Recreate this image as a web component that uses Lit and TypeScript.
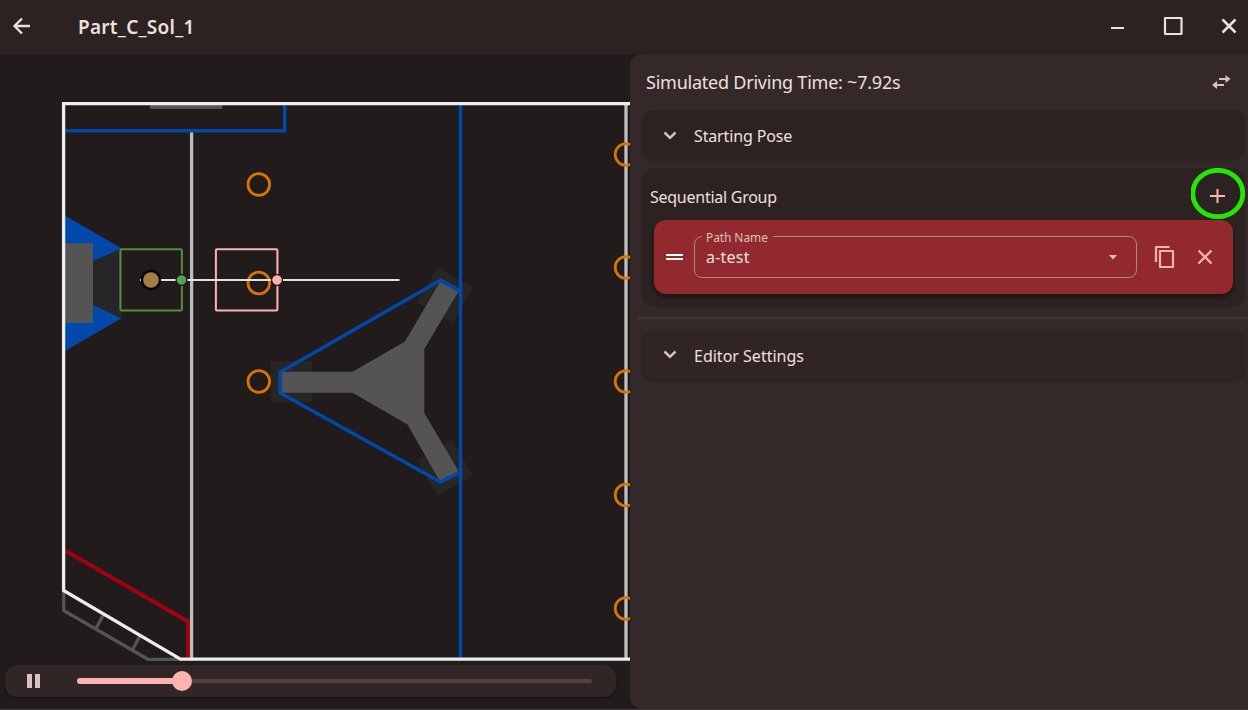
import { LitElement, html, css, svg } from "lit";
import { customElement } from "lit/decorators.js";

const NOTES_NEAR = [[258.8, 184.5], [258.8, 283], [258.8, 381.5]];
const NOTES_CENTER = [[626, 154.5], [626, 267.5], [626, 381.5], [626, 495], [626, 608.5]];

@customElement("field-view")
class FieldView extends LitElement {
  static styles = css`
    :host { display: block; height: 611px; }
    svg { display: block; }
  `;
  render() {
    const ring = ([x, y]: number[]) => svg`<circle cx=${x} cy=${y} r="10.8" fill="none" stroke="#d87400" stroke-width="2.8"/>`;
    return html`<svg width="630" height="611" viewBox="0 54 630 611">
      <rect x="150" y="104" width="72.3" height="5" fill="#545454"/>
      <path d="M65 130.8H284.7V104" fill="none" stroke="#0048aa" stroke-width="3.4"/>
      <path d="M65 215.5L122 248.5L93 261.5V304.5L122 318L65 351Z" fill="#0048aa"/>
      <rect x="64" y="243.3" width="29" height="79.7" fill="#545454"/>
      <path d="M93 261L122 248.5V318.5L93 305Z" fill="#262626"/>
      <g fill="#262626">
        <path d="M271 361H312V402.3H271Z"/>
        <path d="M437.500 267L473 287.500L452.500 323L417 302.500Z"/>
        <path d="M452.500 439.500L473 475.500L437.500 496L417 460Z"/>
      </g>
      <path d="M281 371.700H352.500L405 341.500L440 282L458.500 291.500L424.300 349V413L458.500 471L440 481.500L407.500 424.500L352.500 392.800H281Z" fill="#545454"/>
      <path d="M460.500 291L440.500 280.300L280.300 372V393L440.500 482L460.500 472" fill="none" stroke="#0048aa" stroke-width="3.600"/>
      <path d="M460.500 104V659" stroke="#0048aa" stroke-width="3.400"/>
      <path d="M65 550.500L188 621.500V658" fill="none" stroke="#a00010" stroke-width="4"/>
      <path d="M191.600 132.500V659M626 104V659" stroke="#bdbdbd" stroke-width="3.300"/>
      <path d="M63.700 590V610.500L148 659.300H182M103.500 614.500L96 628.500M140 636L132.500 649.500" fill="none" stroke="#545454" stroke-width="3.300"/>
      <path d="M631 103.600H63.600V590.500L180.500 659.100H631" fill="none" stroke="#ededed" stroke-width="3.300"/>
      ${NOTES_NEAR.map(ring)}${NOTES_CENTER.map(ring)}
      <rect x="120.400" y="249.300" width="61.500" height="61.300" rx="1" fill="none" stroke="#558b3f" stroke-width="2"/>
      <rect x="215.900" y="249.300" width="61.500" height="61.300" rx="1" fill="none" stroke="#ffb3b1" stroke-width="2"/>
      <path d="M140 280H399.500" stroke="#e6dfe0" stroke-width="2"/>
      <circle cx="151" cy="280" r="9" fill="#a37d45" stroke="#000" stroke-width="2.300"/>
      <circle cx="181.500" cy="280" r="5.400" fill="#56a44f" stroke="#15100f" stroke-width="1.200"/>
      <circle cx="277" cy="280" r="5.400" fill="#ffb3b1" stroke="#15100f" stroke-width="1.200"/>
    </svg>`;
  }
}

@customElement("app-root")
class AppRoot extends LitElement {
  static styles = css`
    :host { display: block; }
    * { box-sizing: border-box; }
    svg { display: block; flex: none; }
    .window { width: 1248px; height: 710px; overflow: hidden; display: flex; flex-direction: column; background: #211b1b; color: #ede0df; font-family: "Noto Sans", "Open Sans", sans-serif; border-bottom: 1px solid #3e3a3a; }
    .title-bar { height: 54px; flex: none; display: flex; align-items: center; background: #2c2221; padding: 0 9px 0 11px; }
    .title { margin-left: 46px; flex: 1; font-size: 19px; font-weight: 600; line-height: 54px; letter-spacing: 0.27px; }
    .controls { display: flex; align-items: center; gap: 36px; }
    .main { flex: 1; display: flex; min-height: 0; }
    .canvas { width: 630px; flex: none; }
    .player { margin-left: 5px; width: 611px; height: 32px; border-radius: 12px; background: #302625; display: flex; align-items: center; padding: 0 24px 0 22px; box-shadow: 0 1px 2px #0008; }
    .slider { flex: 1; display: flex; align-items: center; margin-left: 37px; }
    .played { width: 98px; height: 6px; border-radius: 3px 0 0 3px; background: #ffb3b1; }
    .thumb { width: 20px; height: 20px; border-radius: 50%; background: #ffb3b1; margin-left: -3px; }
    .rest { flex: 1; height: 4px; border-radius: 0 2px 2px 0; background: #534342; }
    .panel { flex: 1; background: #342828; border-radius: 12px 0 0 12px; padding: 0 0 0 8px; }
    .summary { height: 56px; display: flex; align-items: center; justify-content: space-between; padding: 0 17px 0 8px; font-size: 18px; }
    .card { margin: 0 3px 0 4px; border-radius: 12px; background: #2c2221; }
    .fold { height: 51px; display: flex; align-items: center; padding-left: 16px; font-size: 16px; }
    .fold span { margin-left: 12px; padding-top: 1px; }
    .settings { background: #302524; box-shadow: 0 1px 2px #0003; height: 50px; }
    .group { margin-top: 7px; height: 139px; padding: 0 12px; }
    .group-head { height: 52px; display: flex; align-items: center; justify-content: space-between; margin: 0 -12px 0 -4px; font-size: 16px; }
    .group-head span { padding-top: 6px; }
    .add { width: 54px; height: 52px; }
    .command { height: 74px; border-radius: 12px; background: #92292e; display: flex; align-items: center; padding: 0 16px 0 8px; box-shadow: 0 3px 5px #0007; }
    .field { margin: 0 0 0 8px; width: 443px; height: 42px; border: 1px solid #ad8786; border-radius: 8px; padding: 0 11px; position: relative; display: flex; align-items: center; justify-content: space-between; font-size: 16px; }
    .label { position: absolute; left: 7px; top: -9px; height: 18px; line-height: 20px; padding: 0 4px; background: #92292e; color: #dfbfbd; font-size: 12px; width: 71px; white-space: nowrap; letter-spacing: -0.1px; }
    .copy { margin-left: 16px; }
    .remove { margin-left: 16px; }
    .divider { height: 2px; margin: 10px 0 11px; background: #443635; }
    .t { white-space: nowrap; }
    .t-time { letter-spacing: -0.23px; }
    .t-pose { letter-spacing: -0.14px; }
    .t-group { letter-spacing: -0.26px; }
    .t-value { letter-spacing: 0.22px; }
  `;
  private chevron() {
    return html`<svg width="24" height="24" viewBox="0 0 24 24"><path d="M6.500 8.500L12 13.800L17.500 8.500" fill="none" stroke="#d8c2c0" stroke-width="2.500"/></svg>`;
  }
  render() {
    return html`<div class="window">
      <header class="title-bar">
        <svg width="21" height="20" viewBox="0 0 21 20"><path d="M19 9H4M11 1.500L3.500 9L11 16.500" fill="none" stroke="#ede0df" stroke-width="2.300"/></svg>
        <div class="title t">Part_C_Sol_1</div>
        <div class="controls">
          <svg width="20" height="20" viewBox="0 0 20 20"><path d="M4 11H17" stroke="#ede0df" stroke-width="2"/></svg>
          <svg width="20" height="20" viewBox="0 0 20 20"><rect x="2" y="1" width="16.500" height="16" rx=".5" fill="none" stroke="#ede0df" stroke-width="2.200"/></svg>
          <svg width="20" height="20" viewBox="0 0 20 20"><path d="M3.500 2.500L16.500 15.500M16.500 2.500L3.500 15.500" stroke="#ede0df" stroke-width="2.500"/></svg>
        </div>
      </header>
      <div class="main">
        <div class="canvas">
          <field-view></field-view>
          <div class="player">
            <svg width="13" height="14" viewBox="0 0 13 14"><path d="M0 0H5V14H0ZM8 0H13V14H8Z" fill="#d8c2c0"/></svg>
            <div class="slider"><div class="played"></div><div class="thumb"></div><div class="rest"></div></div>
          </div>
        </div>
        <div class="panel">
          <div class="summary"><span class="t t-time">Simulated Driving Time: ~7.92s</span>
            <svg width="20" height="16" viewBox="0 0 20 16"><g fill="#d8c2c0"><path d="M8 4H14.500V1L19.500 5L14.500 9V6H8Z"/><path d="M13 12V10H6V7L1 11L6 15V12Z"/></g></svg>
          </div>
          <div class="card fold">${this.chevron()}<span class="t t-pose">Starting Pose</span></div>
          <div class="card group">
            <div class="group-head"><span class="t t-group">Sequential Group</span>
              <svg class="add" viewBox="0 0 54 52"><ellipse cx="26.800" cy="25.500" rx="25" ry="23.200" fill="none" stroke="#25e600" stroke-width="4.800"/><path d="M19 28H34M26.500 21V35" stroke="#ffb3b1" stroke-width="2"/></svg>
            </div>
            <div class="command">
              <svg width="24" height="24" viewBox="0 0 24 24"><path d="M4 10H21M4 14H21" stroke="#fff" stroke-width="2"/></svg>
              <div class="field"><div class="label">Path Name</div><span class="t t-value">a-test</span>
                <svg width="24" height="24" viewBox="0 0 24 24"><path d="M8 10H16L12 14.500Z" fill="#d8c2c0"/></svg></div>
              <svg class="copy" width="24" height="24" viewBox="0 0 24 24"><path d="M3 17V2H16.500M7 6H20V22H7Z" fill="none" stroke="#ffb3b1" stroke-width="2.200" stroke-linejoin="round"/></svg>
              <svg class="remove" width="24" height="24" viewBox="0 0 24 24"><path d="M5.500 5.500L18.500 18.500M18.500 5.500L5.500 18.500" stroke="#ffb3b1" stroke-width="2.300"/></svg>
            </div>
          </div>
          <div class="divider"></div>
          <div class="card fold settings">${this.chevron()}<span class="t">Editor Settings</span></div>
        </div>
      </div>
    </div>`;
  }
}
